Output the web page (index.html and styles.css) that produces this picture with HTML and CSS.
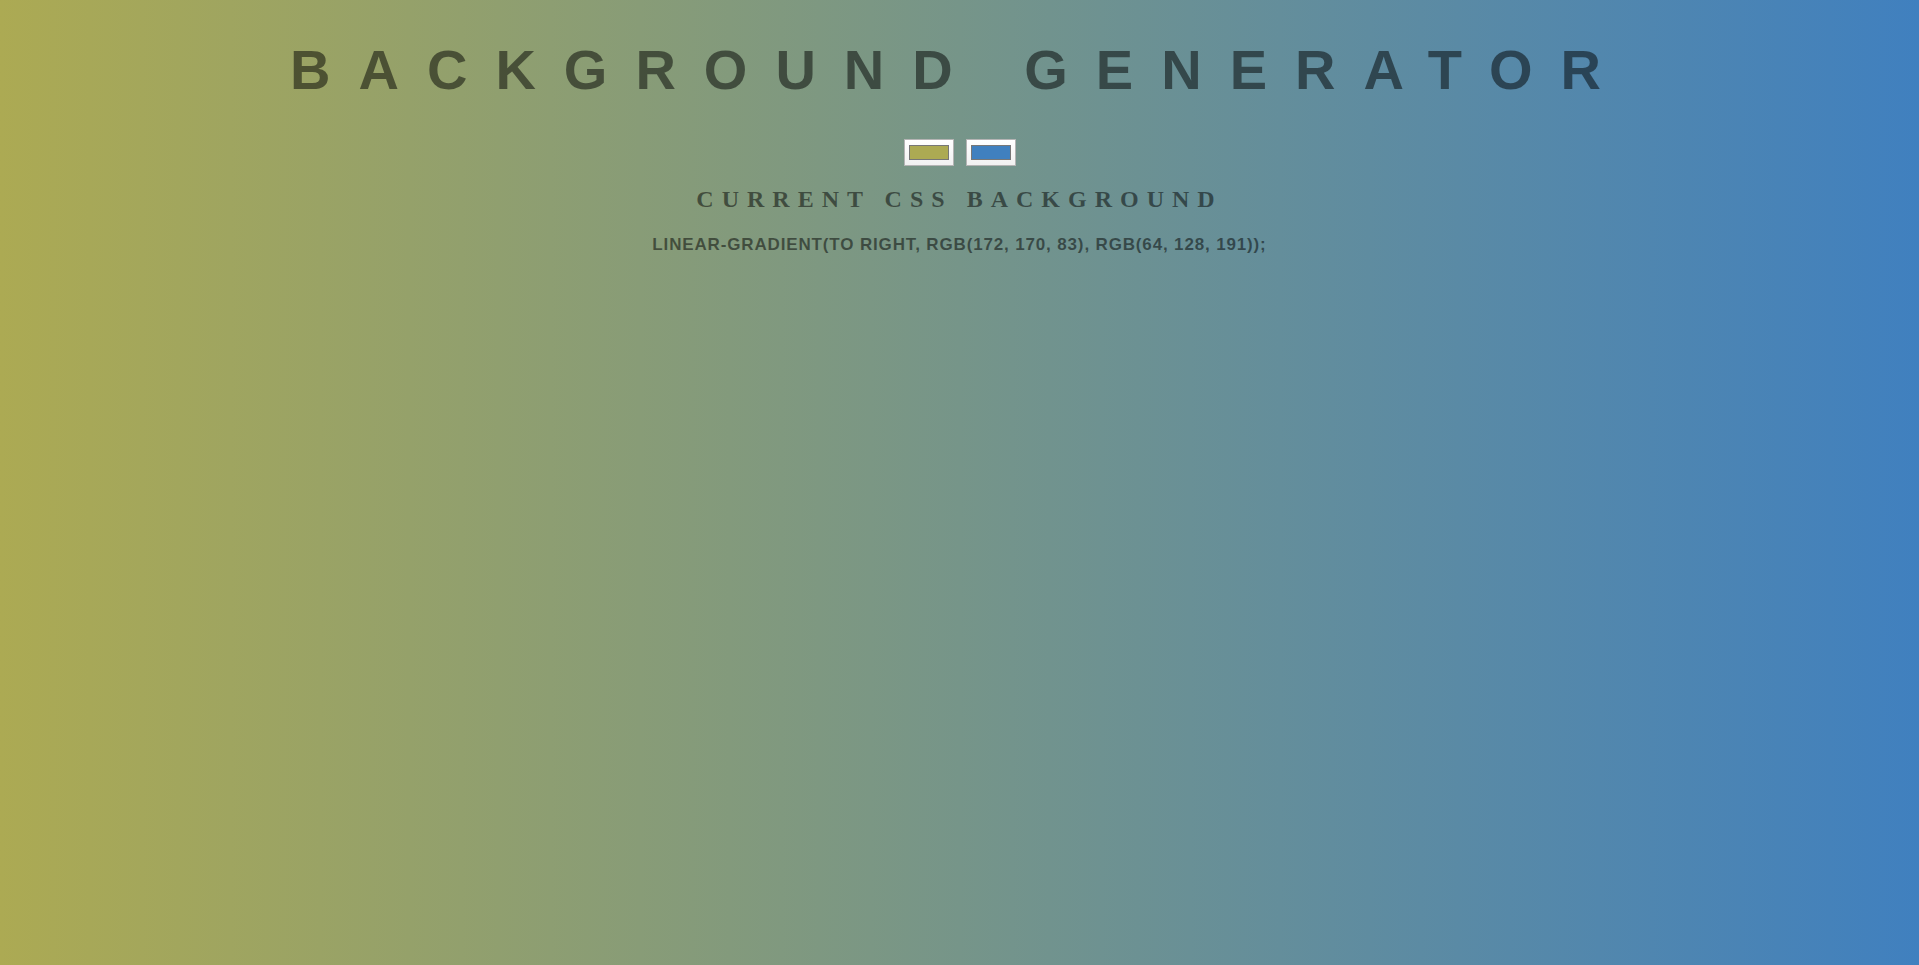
FILE: index.html
```html
<!DOCTYPE html>
<html lang="en">
<head>
<meta charset="utf-8">
<title>Background Generator</title>
<link rel="stylesheet" href="styles.css">
</head>
<body class="page">
  <h1 class="title">Background Generator</h1>
  <div class="pickers">
    <span class="picker"><span class="swatch swatch-one"></span></span>
    <span class="picker"><span class="swatch swatch-two"></span></span>
  </div>
  <h2 class="subtitle">Current CSS Background</h2>
  <h3 class="css-value">linear-gradient(to right, rgb(172, 170, 83), rgb(64, 128, 191));</h3>
</body>
</html>
```
FILE: styles.css
```css
html {
  margin: 0;
  padding: 0;
  min-height: 100%;
  background: linear-gradient(to right, rgb(172, 170, 83), rgb(64, 128, 191));
}

.page {
  margin: 0;
  padding: 0 8px;
  font-family: "Liberation Serif", "Times New Roman", serif;
  font-size: 16px;
  color: rgba(0, 0, 0, 0.5);
  text-align: center;
  text-transform: uppercase;
  letter-spacing: 8px;
}

.title {
  margin: 0;
  padding: 38px 0 36px 0;
  font-family: "Liberation Sans", Arial, sans-serif;
  font-weight: 700;
  font-size: 56px;
  line-height: 64px;
  letter-spacing: 28px;
  color: rgba(0, 0, 0, 0.5);
}

.pickers {
  display: flex;
  justify-content: center;
  gap: 12px;
  padding: 1px 0 0 0;
}

.picker {
  display: block;
  box-sizing: border-box;
  width: 50px;
  height: 27px;
  padding: 5px 4px;
  border: 1px solid #b4b4b4;
  background: linear-gradient(#ffffff, #f1f1f1);
}

.swatch {
  display: block;
  box-sizing: border-box;
  width: 40px;
  height: 15px;
  border: 1px solid #777777;
}

.swatch-one {
  background: rgb(172, 170, 83);
}

.swatch-two {
  background: rgb(64, 128, 191);
}

.subtitle {
  margin: 0;
  padding: 19px 0 0 0;
  font-family: "Liberation Serif", "Times New Roman", serif;
  font-weight: 700;
  font-size: 24px;
  line-height: 28px;
  letter-spacing: 8px;
}

.css-value {
  margin: 0;
  padding: 22px 0 20px 0;
  font-family: "Liberation Sans", Arial, sans-serif;
  font-weight: 900;
  font-size: 17px;
  line-height: 20px;
  letter-spacing: 0.85px;
}
```
